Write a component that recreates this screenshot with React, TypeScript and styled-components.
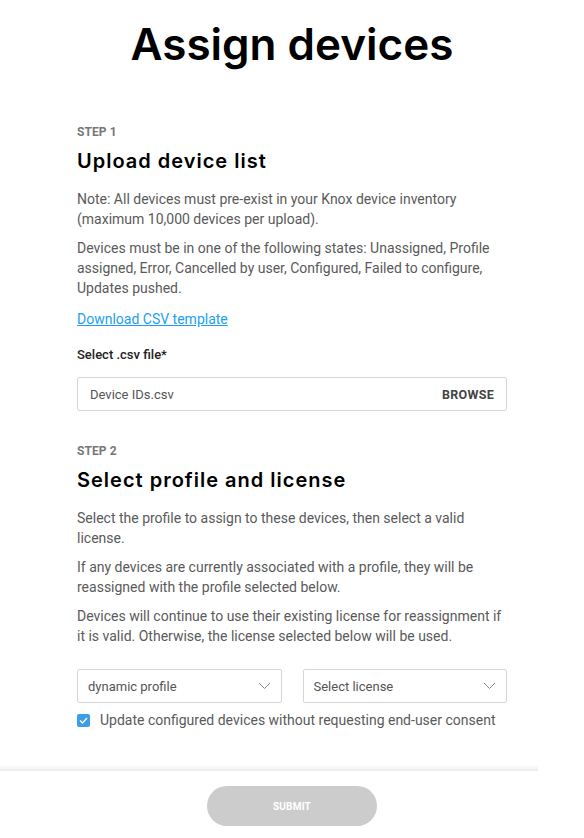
import React, { useState } from 'react';
import styled, { createGlobalStyle } from 'styled-components';

const GlobalStyle = createGlobalStyle`
    html, body {
        margin: 0;
        padding: 0;
        background: #ffffff;
    }
    body {
        font-family: Roboto, 'Noto Sans', sans-serif;
        color: #555555;
    }
`;

const Page = styled.div`
    display: flex;
    flex-direction: column;
    min-height: 838px;
`;

const Title = styled.h1`
    margin: 16px 0 0;
    text-align: center;
    font-family: Inter, 'Noto Sans', sans-serif;
    font-weight: 600;
    font-size: 44px;
    line-height: 56px;
    letter-spacing: 0;
    color: #000000;
`;

const Content = styled.main`
    width: 430px;
    margin: 0 auto;
    padding: 52px 0 40px;
`;

const Step = styled.section`
    & + & {
        margin-top: 32px;
    }
`;

const StepLabel = styled.div`
    font-size: 12px;
    font-weight: 700;
    line-height: 16px;
    color: #777777;
    letter-spacing: 0.1px;
`;

const StepTitle = styled.h2`
    margin: 8px 0 15px;
    font-family: Inter, 'Noto Sans', sans-serif;
    font-weight: 600;
    font-size: 20px;
    line-height: 26px;
    letter-spacing: 1px;
    color: #000000;
`;

const Text = styled.p`
    margin: 0 0 9px;
    font-size: 14px;
    line-height: 20px;
    color: #5a5a5a;
`;

const Link = styled.a`
    display: inline-block;
    margin-top: 2px;
    font-size: 14px;
    line-height: 20px;
    color: #1ba1f2;
    text-decoration: underline;
`;

const FieldLabel = styled.label`
    display: block;
    margin: 17px 0 13px;
    font-size: 13px;
    font-weight: 500;
    line-height: 18px;
    color: #222222;
`;

const FileBox = styled.div`
    display: flex;
    align-items: center;
    justify-content: space-between;
    height: 34px;
    box-sizing: border-box;
    padding: 0 12px;
    border: 1px solid #d6d6d6;
    border-radius: 2px;
    font-size: 13px;
    color: #555555;
`;

const Browse = styled.span`
    font-size: 12.5px;
    font-weight: 700;
    color: #444444;
    letter-spacing: 0.3px;
`;

const SelectRow = styled.div`
    display: grid;
    grid-template-columns: 1fr 1fr;
    gap: 21px;
    margin-top: 23px;
`;

const Select = styled.div`
    display: flex;
    align-items: center;
    justify-content: space-between;
    height: 34px;
    box-sizing: border-box;
    padding: 0 10px;
    border: 1px solid #d6d6d6;
    border-radius: 2px;
    font-size: 13px;
    color: #555555;
`;

const CheckRow = styled.label`
    display: flex;
    align-items: center;
    gap: 10px;
    margin-top: 9px;
    font-size: 14px;
    color: #5a5a5a;
    cursor: pointer;
`;

const Box = styled.span<{ $checked: boolean }>`
    display: inline-flex;
    align-items: center;
    justify-content: center;
    width: 13px;
    height: 13px;
    border-radius: 2px;
    background: ${({ $checked }) => ($checked ? '#3c9ee8' : '#ffffff')};
    border: ${({ $checked }) => ($checked ? 'none' : '1px solid #999')};
`;

const Footer = styled.footer`
    margin-top: auto;
    position: relative;
    display: flex;
    justify-content: center;
    padding: 15px 0 12px;
    &::before {
        content: '';
        position: absolute;
        left: 0;
        top: -6px;
        width: 538px;
        height: 6px;
        background: linear-gradient(to bottom, rgba(0, 0, 0, 0), rgba(0, 0, 0, 0.08));
    }
`;

const Submit = styled.button`
    width: 170px;
    height: 40px;
    border: none;
    border-radius: 20px;
    background: #cccccc;
    color: #ffffff;
    font-family: Roboto, 'Noto Sans', sans-serif;
    font-size: 10px;
    font-weight: 700;
    letter-spacing: 0.2px;
`;

const Chevron = () => (
    <svg width="13" height="8" viewBox="0 0 13 8" fill="none">
        <path d="M1 1l5.5 5.5L12 1" stroke="#888" strokeWidth="1" />
    </svg>
);

const App: React.FC = () => {
    const [consent, setConsent] = useState(true);
    return (
        <Page>
            <GlobalStyle />
            <Title>Assign devices</Title>
            <Content>
                <Step>
                    <StepLabel>STEP 1</StepLabel>
                    <StepTitle>Upload device list</StepTitle>
                    <Text>
                        Note: All devices must pre-exist in your Knox device inventory (maximum 10,000
                        devices per upload).
                    </Text>
                    <Text>
                        Devices must be in one of the following states: Unassigned, Profile assigned,
                        Error, Cancelled by user, Configured, Failed to configure, Updates pushed.
                    </Text>
                    <Link href="#">Download CSV template</Link>
                    <FieldLabel>Select .csv file*</FieldLabel>
                    <FileBox>
                        <span>Device IDs.csv</span>
                        <Browse>BROWSE</Browse>
                    </FileBox>
                </Step>
                <Step>
                    <StepLabel>STEP 2</StepLabel>
                    <StepTitle>Select profile and license</StepTitle>
                    <Text>
                        Select the profile to assign to these devices, then select a valid license.
                    </Text>
                    <Text>
                        If any devices are currently associated with a profile, they will be reassigned
                        with the profile selected below.
                    </Text>
                    <Text>
                        Devices will continue to use their existing license for reassignment if it is
                        valid. Otherwise, the license selected below will be used.
                    </Text>
                    <SelectRow>
                        <Select>
                            <span>dynamic profile</span>
                            <Chevron />
                        </Select>
                        <Select>
                            <span>Select license</span>
                            <Chevron />
                        </Select>
                    </SelectRow>
                    <CheckRow onClick={() => setConsent((v) => !v)}>
                        <Box $checked={consent}>
                            {consent && (
                                <svg width="9" height="7" viewBox="0 0 9 7" fill="none">
                                    <path d="M1 3.5l2.5 2.5L8 1" stroke="#fff" strokeWidth="1.3" />
                                </svg>
                            )}
                        </Box>
                        Update configured devices without requesting end-user consent
                    </CheckRow>
                </Step>
            </Content>
            <Footer>
                <Submit type="button" disabled>
                    SUBMIT
                </Submit>
            </Footer>
        </Page>
    );
};

export default App;
